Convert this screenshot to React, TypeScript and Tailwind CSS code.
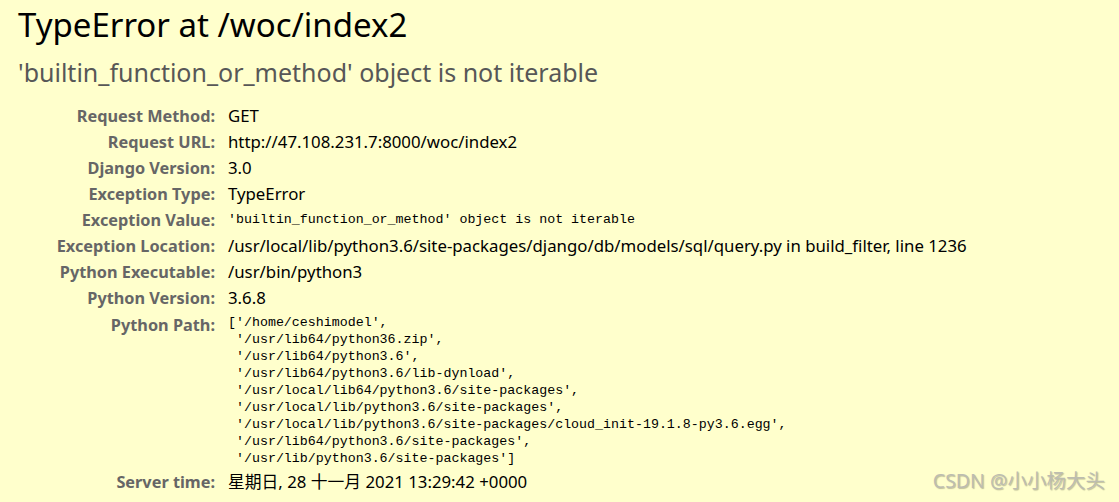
const rows: { label: string; value: string; mono?: boolean }[] = [
  { label: "Request Method:", value: "GET" },
  { label: "Request URL:", value: "http://47.108.231.7:8000/woc/index2" },
  { label: "Django Version:", value: "3.0" },
  { label: "Exception Type:", value: "TypeError" },
  {
    label: "Exception Value:",
    value: "'builtin_function_or_method' object is not iterable",
    mono: true,
  },
  {
    label: "Exception Location:",
    value:
      "/usr/local/lib/python3.6/site-packages/django/db/models/sql/query.py in build_filter, line 1236",
  },
  { label: "Python Executable:", value: "/usr/bin/python3" },
  { label: "Python Version:", value: "3.6.8" },
]

const pythonPath = [
  "['/home/ceshimodel',",
  " '/usr/lib64/python36.zip',",
  " '/usr/lib64/python3.6',",
  " '/usr/lib64/python3.6/lib-dynload',",
  " '/usr/local/lib64/python3.6/site-packages',",
  " '/usr/local/lib/python3.6/site-packages',",
  " '/usr/local/lib/python3.6/site-packages/cloud_init-19.1.8-py3.6.egg',",
  " '/usr/lib64/python3.6/site-packages',",
  " '/usr/lib/python3.6/site-packages']",
]

const sans = "font-['Noto_Sans','Noto_Sans_CJK_SC',sans-serif]"

const App = () => {
  return (
    <div
      className={`relative h-[502px] w-full overflow-hidden bg-[#ffffcc] pl-[18px] pt-[3px] text-black ${sans}`}
    >
      {/* SUMMARY */}
      <h1 className="text-[33px] leading-[44px] font-normal">
        TypeError at /woc/index2
      </h1>
      <h2 className="mt-[8px] text-[25px] leading-[34px] font-normal text-[#575757]">
        'builtin_function_or_method' object is not iterable
      </h2>

      {/* META TABLE */}
      <div className="mt-[14px] grid grid-cols-[197px_1fr] gap-x-[13px] text-[16.8px]">
        {rows.map((row) => (
          <div key={row.label} className="contents">
            <div className="flex h-[26px] items-center justify-end text-[16.3px] font-bold text-[#666]">
              {row.label}
            </div>
            <div className="flex h-[26px] items-center whitespace-nowrap">
              {row.mono ? (
                <pre className="font-['Liberation_Mono',monospace] text-[13.3px]">
                  {row.value}
                </pre>
              ) : (
                row.value
              )}
            </div>
          </div>
        ))}

        <div className="flex h-[158px] items-start justify-end pt-[1px] text-[16.3px] font-bold leading-[26px] text-[#666]">
          Python Path:
        </div>
        <pre className="h-[158px] pt-[3px] font-['Liberation_Mono',monospace] text-[13.3px] leading-[17px]">
          {pythonPath.join("\n")}
        </pre>

        <div className="flex h-[26px] items-center justify-end text-[16.3px] font-bold text-[#666]">
          Server time:
        </div>
        <div className="flex h-[26px] items-center whitespace-nowrap">
          星期日, 28 十一月 2021 13:29:42 +0000
        </div>
      </div>

      {/* WATERMARK */}
      <div className="absolute right-[14px] bottom-[7px] text-[19.5px] text-[#bdbdb0] [text-shadow:1px_1px_1px_rgba(0,0,0,0.25)]">
        CSDN @小小杨大头
      </div>
    </div>
  )
}

export default App
